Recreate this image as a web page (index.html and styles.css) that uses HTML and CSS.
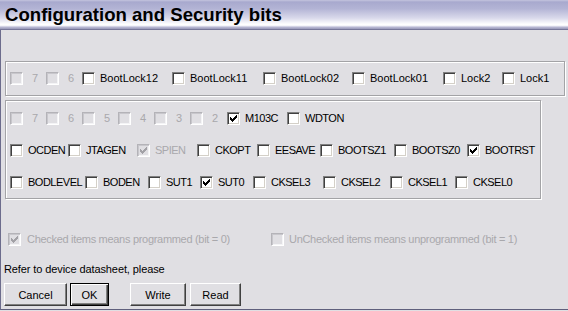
FILE: index.html
```html
<!DOCTYPE html>
<html lang="en">
<head>
    <meta charset="UTF-8">
    <title>Configuration and Security bits</title>
    <link rel="stylesheet" href="styles.css">
</head>
<body>
    <div class="window">
        <div class="titlebar">Configuration and Security bits</div>

        <div class="client">
            <div class="group group-lock">
                <label class="cb off num"><span class="box"></span>7</label>
                <label class="cb off num"><span class="box"></span>6</label>
                <label class="cb"><span class="box"></span>BootLock12</label>
                <label class="cb"><span class="box"></span>BootLock11</label>
                <label class="cb"><span class="box"></span>BootLock02</label>
                <label class="cb"><span class="box"></span>BootLock01</label>
                <label class="cb"><span class="box"></span>Lock2</label>
                <label class="cb"><span class="box"></span>Lock1</label>
            </div>

            <div class="group group-fuse">
                <div class="row row-high">
                    <label class="cb off num"><span class="box"></span>7</label>
                    <label class="cb off num"><span class="box"></span>6</label>
                    <label class="cb off num"><span class="box"></span>5</label>
                    <label class="cb off num"><span class="box"></span>4</label>
                    <label class="cb off num"><span class="box"></span>3</label>
                    <label class="cb off num"><span class="box"></span>2</label>
                    <label class="cb"><span class="box"><svg class="tick" viewBox="0 0 7 7"><path d="M0 2h1v3H0zM1 3h1v3H1zM2 4h1v3H2zM3 3h1v3H3zM4 2h1v3H4zM5 1h1v3H5zM6 0h1v3H6z"/></svg></span>M103C</label>
                    <label class="cb"><span class="box"></span>WDTON</label>
                </div>
                <div class="row row-mid">
                    <label class="cb"><span class="box"></span>OCDEN</label>
                    <label class="cb"><span class="box"></span>JTAGEN</label>
                    <label class="cb off"><span class="box"><svg class="tick" viewBox="0 0 7 7"><path d="M0 2h1v3H0zM1 3h1v3H1zM2 4h1v3H2zM3 3h1v3H3zM4 2h1v3H4zM5 1h1v3H5zM6 0h1v3H6z"/></svg></span>SPIEN</label>
                    <label class="cb"><span class="box"></span>CKOPT</label>
                    <label class="cb"><span class="box"></span>EESAVE</label>
                    <label class="cb"><span class="box"></span>BOOTSZ1</label>
                    <label class="cb"><span class="box"></span>BOOTSZ0</label>
                    <label class="cb"><span class="box"><svg class="tick" viewBox="0 0 7 7"><path d="M0 2h1v3H0zM1 3h1v3H1zM2 4h1v3H2zM3 3h1v3H3zM4 2h1v3H4zM5 1h1v3H5zM6 0h1v3H6z"/></svg></span>BOOTRST</label>
                </div>
                <div class="row row-low">
                    <label class="cb"><span class="box"></span>BODLEVEL</label>
                    <label class="cb"><span class="box"></span>BODEN</label>
                    <label class="cb"><span class="box"></span>SUT1</label>
                    <label class="cb"><span class="box"><svg class="tick" viewBox="0 0 7 7"><path d="M0 2h1v3H0zM1 3h1v3H1zM2 4h1v3H2zM3 3h1v3H3zM4 2h1v3H4zM5 1h1v3H5zM6 0h1v3H6z"/></svg></span>SUT0</label>
                    <label class="cb"><span class="box"></span>CKSEL3</label>
                    <label class="cb"><span class="box"></span>CKSEL2</label>
                    <label class="cb"><span class="box"></span>CKSEL1</label>
                    <label class="cb"><span class="box"></span>CKSEL0</label>
                </div>
            </div>

            <div class="legend">
                <label class="cb off legend-item"><span class="box"><svg class="tick" viewBox="0 0 7 7"><path d="M0 2h1v3H0zM1 3h1v3H1zM2 4h1v3H2zM3 3h1v3H3zM4 2h1v3H4zM5 1h1v3H5zM6 0h1v3H6z"/></svg></span>Checked items means programmed (bit = 0)</label>
                <label class="cb off"><span class="box"></span>UnChecked items means unprogrammed (bit = 1)</label>
            </div>

            <p class="note">Refer to device datasheet, please</p>

            <div class="buttons">
                <button class="btn btn-cancel">Cancel</button>
                <button class="btn btn-ok">OK</button>
                <button class="btn btn-write">Write</button>
                <button class="btn btn-read">Read</button>
            </div>
        </div>
    </div>
</body>
</html>
```

FILE: styles.css
```css
:root {
    --face: #e0dfe3;
    --frame: #6c6c8c;
    --etch: #a3a3a6;
    --disabled: #a9a8ac;
}

* {
    box-sizing: border-box;
}

body {
    margin: 0;
    background-color: var(--face);
    font-family: 'Liberation Sans', Arial, sans-serif;
    font-size: 11px;
    color: #000;
}

.window {
    width: 568px;
    height: 311px;
    display: flex;
    flex-direction: column;
}

/* caption strip */
.titlebar {
    height: 30px;
    padding-left: 5px;
    border-bottom: 1px solid #77779a;
    background: linear-gradient(#c4c4de 0, #a8a9ce 2px, #b3b4d5 30%, #d9d9eb 62%, #ffffff 84%, #f3f3f9 89%, #bdbdd7 93%, #9898b8 100%);
    font-size: 18.6px;
    font-weight: bold;
    line-height: 29px;
    white-space: nowrap;
}

.client {
    flex: 1;
    border-left: 1px solid var(--frame);
    border-bottom: 1px solid #5f5f7c;
    margin-bottom: 1px;
    padding: 31px 0 0 3px;
}

/* etched group boxes */
.group {
    margin-left: 1px;
    border: 1px solid var(--etch);
    box-shadow: inset 1px 1px #fff, 1px 1px #fff;
}

.group-lock {
    width: 560px;
    height: 35px;
    padding-left: 4px;
    display: grid;
    grid-template-columns: 36px 36px 90px 91px 89px 91px 59px auto;
    align-items: center;
}

.group-fuse {
    width: 536px;
    height: 99px;
    margin-top: 4px;
    padding: 1px 0 0 4px;
}

.row {
    height: 32px;
    display: grid;
    align-items: center;
    letter-spacing: -0.5px;
}

.row-high {
    grid-template-columns: 36px 36px 36px 36px 36px 37px 60px auto;
}

.row-mid {
    grid-template-columns: 58px 69px 60px 60px 63px 74px 73px auto;
}

.row-low {
    grid-template-columns: 75px 63px 52px 53px 70px 67px 65px auto;
}

/* checkbox */
.cb {
    display: flex;
    align-items: center;
    gap: 5px;
    height: 13px;
    line-height: 13px;
    white-space: nowrap;
}

.cb.num {
    gap: 9px;
}

.box {
    width: 13px;
    height: 13px;
    flex: none;
    display: flex;
    align-items: center;
    justify-content: center;
    background-color: #fff;
    border: 1px solid;
    border-color: #808080 #fff #fff #808080;
    box-shadow: inset 1px 1px #404040, inset -1px -1px #d4d0c8;
}

.tick {
    width: 7px;
    height: 7px;
    fill: #000;
    shape-rendering: crispEdges;
}

.cb.off {
    color: var(--disabled);
}

.cb.off .box {
    background-color: var(--face);
    border-color: #b4b3b8 #fff #fff #b4b3b8;
    box-shadow: inset 1px 1px #c8c7cc, inset -1px -1px #f4f4f6;
}

.cb.off .tick {
    fill: #a2a1a6;
}

.legend {
    display: flex;
    margin-top: 34px;
    padding-left: 4px;
    letter-spacing: -0.3px;
}

.legend-item {
    width: 263px;
    gap: 6px;
}

.note {
    margin: 16px 0 0;
    line-height: 14px;
    letter-spacing: -0.1px;
}

.buttons {
    display: flex;
    margin-top: 7px;
}

.btn {
    height: 23px;
    padding: 0;
    font-family: inherit;
    font-size: 11px;
    color: #000;
    background-color: var(--face);
    border: 1px solid;
    border-color: #fff #404040 #404040 #fff;
    box-shadow: inset -1px -1px #808080;
}

.btn-cancel {
    width: 63px;
}

.btn-ok {
    width: 39px;
    margin-left: 3px;
    border-color: #000;
    box-shadow: inset 1px 1px #fff, inset -1px -1px #404040, inset -2px -2px #808080;
}

.btn-write {
    width: 56px;
    margin-left: 21px;
}

.btn-read {
    width: 51px;
    margin-left: 4px;
}
```
